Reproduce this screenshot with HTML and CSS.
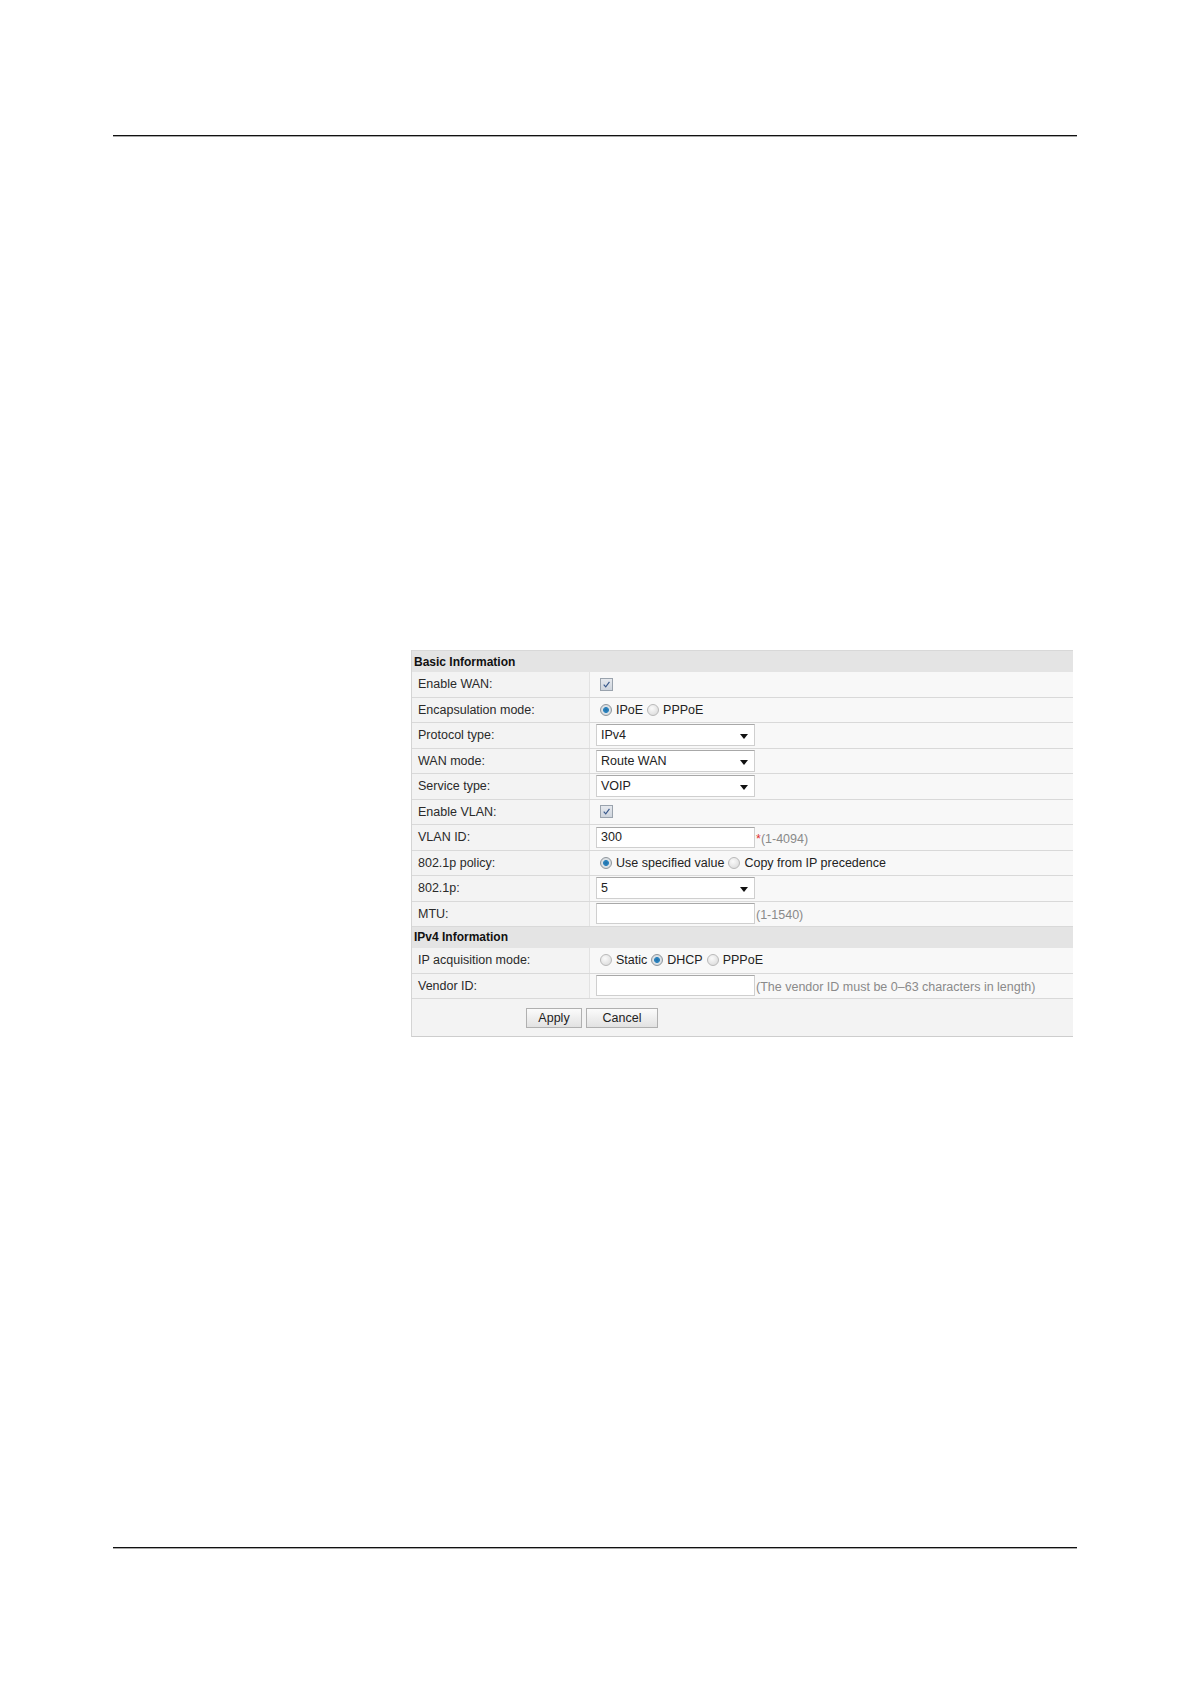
FILE: index.html
```html
<!DOCTYPE html>
<html>
<head>
<meta charset="utf-8">
<link rel="stylesheet" href="styles.css">
</head>
<body>
<div class="page">
  <div class="rule rule-top"></div>
  <div class="form">
    <div class="sec">Basic Information</div>
    <div class="row">
      <div class="lbl">Enable WAN:</div>
      <div class="val"><span class="chk"><svg viewBox="0 0 13 13" width="11" height="11"><path d="M3.2 6.6 L5.6 9.2 L10 3.4" fill="none" stroke="#3a5a8c" stroke-width="1.4"/></svg></span></div>
    </div>
    <div class="row">
      <div class="lbl">Encapsulation mode:</div>
      <div class="val"><span class="radio on"></span><span class="opt">IPoE</span><span class="radio"></span><span class="opt">PPPoE</span></div>
    </div>
    <div class="row">
      <div class="lbl">Protocol type:</div>
      <div class="val"><div class="sel">IPv4<span class="arr"></span></div></div>
    </div>
    <div class="row">
      <div class="lbl">WAN mode:</div>
      <div class="val"><div class="sel">Route WAN<span class="arr"></span></div></div>
    </div>
    <div class="row">
      <div class="lbl">Service type:</div>
      <div class="val"><div class="sel">VOIP<span class="arr"></span></div></div>
    </div>
    <div class="row">
      <div class="lbl">Enable VLAN:</div>
      <div class="val"><span class="chk"><svg viewBox="0 0 13 13" width="11" height="11"><path d="M3.2 6.6 L5.6 9.2 L10 3.4" fill="none" stroke="#3a5a8c" stroke-width="1.4"/></svg></span></div>
    </div>
    <div class="row">
      <div class="lbl">VLAN ID:</div>
      <div class="val"><div class="inp">300</div><span class="hint"><span class="req">*</span>(1-4094)</span></div>
    </div>
    <div class="row">
      <div class="lbl">802.1p policy:</div>
      <div class="val"><span class="radio on"></span><span class="opt">Use specified value</span><span class="radio"></span><span class="opt">Copy from IP precedence</span></div>
    </div>
    <div class="row">
      <div class="lbl">802.1p:</div>
      <div class="val"><div class="sel">5<span class="arr"></span></div></div>
    </div>
    <div class="row">
      <div class="lbl">MTU:</div>
      <div class="val"><div class="inp"></div><span class="hint">(1-1540)</span></div>
    </div>
    <div class="sec sec2">IPv4 Information</div>
    <div class="row">
      <div class="lbl">IP acquisition mode:</div>
      <div class="val"><span class="radio"></span><span class="opt">Static</span><span class="radio on"></span><span class="opt">DHCP</span><span class="radio"></span><span class="opt">PPPoE</span></div>
    </div>
    <div class="row">
      <div class="lbl">Vendor ID:</div>
      <div class="val"><div class="inp"></div><span class="hint">(The vendor ID must be 0–63 characters in length)</span></div>
    </div>
    <div class="btns">
      <span class="btn btn-apply">Apply</span>
      <span class="btn btn-cancel">Cancel</span>
    </div>
  </div>
  <div class="rule rule-bottom"></div>
</div>
</body>
</html>
```
FILE: styles.css
```css
html, body {
  margin: 0;
  padding: 0;
  background: #fff;
}
.page {
  width: 1191px;
  height: 1684px;
  display: flex;
  flex-direction: column;
  font-family: "Liberation Sans", Arial, sans-serif;
  font-size: 12.5px;
  color: #333;
}
.rule {
  margin-left: 113px;
  width: 964px;
  height: 1px;
  background: #111;
  box-shadow: 0 0.5px 0 #555;
}
.rule-top {
  margin-top: 135px;
}
.rule-bottom {
  margin-top: 510px;
}
.form {
  margin-top: 514px;
  margin-left: 411px;
  width: 661px;
  display: flex;
  flex-direction: column;
  border-left: 1px solid #d4d4d4;
  background: #f6f6f6;
}
.sec {
  height: 22px;
  line-height: 22px;
  background: #e4e4e4;
  font-weight: bold;
  font-size: 12px;
  color: #111;
  padding-left: 2px;
  border-top: 1px solid #d8d8d8;
  box-sizing: border-box;
}
.sec2 {
  height: 21px;
  line-height: 21px;
  border-top: none;
}
.row {
  display: grid;
  grid-template-columns: 178px 1fr;
  height: 25.5px;
  border-bottom: 1px solid #d9d9d9;
  box-sizing: border-box;
}
.lbl {
  padding-left: 6px;
  display: flex;
  align-items: center;
  background: #f3f3f3;
  border-right: 1px solid #e2e2e2;
  color: #2a2a2a;
}
.val {
  display: flex;
  align-items: center;
  padding-left: 6px;
  background: #f8f8f8;
}
.chk {
  margin-left: 4px;
  width: 13px;
  height: 13px;
  box-sizing: border-box;
  border: 1px solid #9aa3ad;
  background: linear-gradient(#e6e9ee, #cfd5dd);
  display: flex;
  align-items: center;
  justify-content: center;
}
.chk svg {
  display: block;
}
.radio {
  width: 12px;
  height: 12px;
  border-radius: 50%;
  box-sizing: border-box;
  border: 1px solid #b9b9b9;
  background: radial-gradient(circle at 40% 35%, #fafafa, #d6d6d6);
  margin-left: 4px;
  margin-right: 4px;
  flex: none;
}
.radio.on {
  background: radial-gradient(circle, #1f6fa8 0, #2f86c0 2.6px, #dfe4e8 3.3px, #c9ced3 100%);
  border-color: #8f969c;
}
.opt {
  color: #222;
}
.sel, .inp {
  width: 159px;
  height: 22px;
  box-sizing: border-box;
  border: 1px solid #cfcfcf;
  border-top-color: #a8a8a8;
  background: #fff;
  padding-left: 4px;
  display: flex;
  align-items: center;
  position: relative;
  color: #222;
}
.inp {
  height: 21px;
}
.arr {
  position: absolute;
  right: 6px;
  top: 9px;
  width: 0;
  height: 0;
  border-left: 4px solid transparent;
  border-right: 4px solid transparent;
  border-top: 5px solid #111;
}
.hint {
  color: #8a8a8a;
  margin-left: 1px;
  padding-top: 3px;
}
.req {
  color: #e03030;
}
.btns {
  height: 38px;
  display: flex;
  align-items: center;
  gap: 4px;
  padding-left: 114px;
  background: #f3f3f3;
  border-bottom: 1px solid #cdcdcd;
  box-sizing: border-box;
}
.btn {
  height: 20px;
  box-sizing: border-box;
  border: 1px solid #b0b0b0;
  background: linear-gradient(#fbfbfb, #e2e2e2);
  display: flex;
  align-items: center;
  justify-content: center;
  color: #222;
}
.btn-apply {
  width: 56px;
}
.btn-cancel {
  width: 72px;
}
```
